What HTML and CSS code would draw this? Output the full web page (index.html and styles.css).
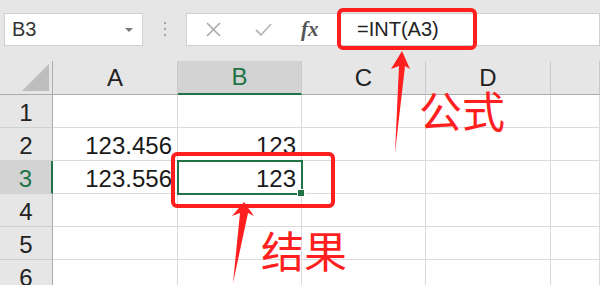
FILE: index.html
```html
<!DOCTYPE html>
<html lang="zh-CN">
<head>
    <meta charset="UTF-8">
    <title>INT 函数</title>
    <link rel="stylesheet" href="styles.css">
</head>
<body>
    <div class="screen">
        <div class="bar">
            <div class="namebox">
                <span>B3</span>
                <span class="caret"></span>
            </div>
            <div class="grip"><i></i><i></i><i></i></div>
            <div class="fbuttons">
                <svg class="ico" width="18" height="18" viewBox="0 0 18 18">
                    <path d="M2 2 L15 15 M15 2 L2 15" stroke="#a9a9a9" stroke-width="1.6" fill="none"/>
                </svg>
                <svg class="ico" width="18" height="18" viewBox="0 0 18 18">
                    <path d="M1 9 L6 14 L16 3" stroke="#b8b8b8" stroke-width="1.8" fill="none"/>
                </svg>
                <span class="fx">fx</span>
            </div>
            <div class="formula">=INT(A3)</div>
        </div>

        <div class="sheet">
            <div class="corner">
                <svg width="27" height="27" viewBox="0 0 27 27"><path d="M0 27 L27 0 L27 27 Z" fill="#bdbdbd"/></svg>
            </div>
            <div class="colhead">A</div>
            <div class="colhead sel">B</div>
            <div class="colhead">C</div>
            <div class="colhead">D</div>
            <div class="colhead"></div>

            <div class="rowhead">1</div>
            <div class="cell"></div><div class="cell"></div><div class="cell"></div><div class="cell"></div><div class="cell"></div>

            <div class="rowhead">2</div>
            <div class="cell num">123.456</div><div class="cell num">123</div><div class="cell"></div><div class="cell"></div><div class="cell"></div>

            <div class="rowhead sel">3</div>
            <div class="cell num">123.556</div><div class="cell num active">123</div><div class="cell"></div><div class="cell"></div><div class="cell"></div>

            <div class="rowhead">4</div>
            <div class="cell"></div><div class="cell"></div><div class="cell"></div><div class="cell"></div><div class="cell"></div>

            <div class="rowhead">5</div>
            <div class="cell"></div><div class="cell"></div><div class="cell"></div><div class="cell"></div><div class="cell"></div>

            <div class="rowhead">6</div>
            <div class="cell"></div><div class="cell"></div><div class="cell"></div><div class="cell"></div><div class="cell"></div>
        </div>

        <!-- red notes drawn over the sheet -->
        <svg class="marks" width="600" height="285" viewBox="0 0 600 285">
            <rect x="339" y="10" width="136" height="38" rx="4" fill="none" stroke="#ff1f1f" stroke-width="4"/>
            <rect x="173" y="154" width="160" height="52" rx="4" fill="none" stroke="#ff1f1f" stroke-width="4"/>
            <polygon points="402,51 391,69 399,66 395,153 405,66 410,69" fill="#ff1f1f"/>
            <polygon points="244,202 232,216 240,213 233,283 248,213 254,216" fill="#ff1f1f"/>
        </svg>
        <span class="note note-formula">公式</span>
        <span class="note note-result">结果</span>
    </div>
</body>
</html>
```

FILE: styles.css
```css
body {
    margin: 0;
    font-family: "Liberation Sans", "Noto Sans CJK SC", sans-serif;
    background-color: #ffffff;
}

.screen {
    position: relative;
    width: 600px;
    height: 285px;
    overflow: hidden;
    background-color: #e6e6e6;
}

/* formula bar */
.bar {
    display: flex;
    align-items: flex-start;
    height: 61px;
    padding: 13px 0 0 4px;
    box-sizing: border-box;
}

.namebox {
    display: flex;
    align-items: center;
    justify-content: space-between;
    width: 139px;
    height: 33px;
    box-sizing: border-box;
    padding: 0 9px 0 7px;
    background-color: white;
    border: 1px solid #d0d0d0;
    font-size: 20px;
    color: #333;
}

.caret {
    width: 0;
    height: 0;
    border-left: 4px solid transparent;
    border-right: 4px solid transparent;
    border-top: 4px solid #777;
}

.grip {
    display: flex;
    flex-direction: column;
    gap: 4px;
    width: 43px;
    align-items: center;
    padding-top: 9px;
}

.grip i {
    display: block;
    width: 2px;
    height: 2px;
    background-color: #a8a8a8;
}

.fbuttons {
    display: flex;
    align-items: center;
    width: 151px;
    height: 33px;
    box-sizing: border-box;
    padding-left: 18px;
    gap: 32px;
    background-color: white;
    border: 1px solid #d0d0d0;
    border-right: none;
}

.fx {
    font-family: "Liberation Serif", serif;
    font-style: italic;
    font-weight: bold;
    font-size: 21px;
    color: #555;
    margin-left: -4px;
}

.formula {
    flex: 1;
    height: 33px;
    box-sizing: border-box;
    padding-left: 19px;
    line-height: 31px;
    background-color: white;
    border: 1px solid #d0d0d0;
    font-size: 20px;
    color: #222;
}

/* sheet grid */
.sheet {
    display: grid;
    grid-template-columns: 53px 125px 124px 124px 125px 1fr;
    grid-template-rows: 34px;
    grid-auto-rows: 33px;
    background-color: white;
}

.corner {
    display: flex;
    align-items: flex-end;
    justify-content: flex-end;
    padding: 0 3px 3px 0;
    background-color: #e6e6e6;
    border-right: 1px solid #ababab;
    border-bottom: 1px solid #ababab;
}

.colhead {
    display: flex;
    align-items: center;
    justify-content: center;
    background-color: #e6e6e6;
    border-right: 1px solid #c9c9c9;
    border-bottom: 1px solid #ababab;
    font-size: 24px;
    color: #222;
}

.colhead.sel {
    background-color: #d3d3d3;
    color: #217346;
    border-bottom: 2px solid #217346;
}

.rowhead {
    display: flex;
    align-items: center;
    justify-content: center;
    padding-top: 4px;
    box-sizing: border-box;
    background-color: #e6e6e6;
    border-right: 1px solid #ababab;
    border-bottom: 1px solid #d0d0d0;
    font-size: 24px;
    color: #222;
}

.rowhead.sel {
    background-color: #d3d3d3;
    color: #217346;
    border-right: 2px solid #217346;
}

.cell {
    display: flex;
    align-items: center;
    padding-top: 4px;
    box-sizing: border-box;
    border-right: 1px solid #dadada;
    border-bottom: 1px solid #dadada;
    font-size: 24px;
    color: #1a1a1a;
}

.num {
    justify-content: flex-end;
    padding-right: 5px;
}

.active {
    position: relative;
    outline: 2px solid #217346;
    outline-offset: -1px;
}

.active::after {
    content: "";
    position: absolute;
    right: -4px;
    bottom: -4px;
    width: 6px;
    height: 6px;
    background-color: #217346;
    border: 1px solid white;
}

/* annotations */
.marks {
    position: absolute;
    left: 0;
    top: 0;
}

.note {
    position: absolute;
    font-family: "Noto Sans CJK SC", sans-serif;
    font-size: 43px;
    line-height: 1;
    color: #ff1f1f;
}

.note-formula {
    left: 419px;
    top: 88px;
}

.note-result {
    left: 261px;
    top: 228px;
}
```
